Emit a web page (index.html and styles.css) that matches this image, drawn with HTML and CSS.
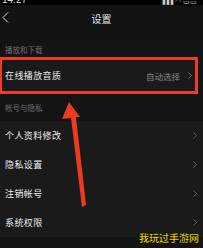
FILE: index.html
```html
<!DOCTYPE html>
<html lang="zh">
<head>
<meta charset="utf-8">
<link rel="stylesheet" href="styles.css">
</head>
<body>
<div class="screen">
  <div class="status">
    <span class="time">14:27</span>
    <span class="icons">▮▮▮ ◠ ▭▭</span>
  </div>
  <div class="header">
    <svg class="back" width="7" height="11" viewBox="0 0 7 11"><path d="M6 0.5 L1 5.5 L6 10.5" fill="none" stroke="#ddd" stroke-width="1"/></svg>
    <span class="title">设置</span>
  </div>
  <div class="section first">播放和下载</div>
  <div class="row highlight">
    <span class="label">在线播放音质</span>
    <span class="value">自动选择</span>
    <svg class="chev" width="4" height="7" viewBox="0 0 4 7"><path d="M0.5 0.5 L3.5 3.5 L0.5 6.5" fill="none" stroke="#777" stroke-width="0.9"/></svg>
  </div>
  <div class="section">帐号与隐私</div>
  <div class="row">
    <span class="label">个人资料修改</span>
    <svg class="chev" width="4" height="7" viewBox="0 0 4 7"><path d="M0.5 0.5 L3.5 3.5 L0.5 6.5" fill="none" stroke="#666" stroke-width="0.9"/></svg>
  </div>
  <div class="row">
    <span class="label">隐私设置</span>
    <svg class="chev" width="4" height="7" viewBox="0 0 4 7"><path d="M0.5 0.5 L3.5 3.5 L0.5 6.5" fill="none" stroke="#666" stroke-width="0.9"/></svg>
  </div>
  <div class="row">
    <span class="label">注销帐号</span>
    <svg class="chev" width="4" height="7" viewBox="0 0 4 7"><path d="M0.5 0.5 L3.5 3.5 L0.5 6.5" fill="none" stroke="#666" stroke-width="0.9"/></svg>
  </div>
  <div class="row">
    <span class="label">系统权限</span>
    <svg class="chev" width="4" height="7" viewBox="0 0 4 7"><path d="M0.5 0.5 L3.5 3.5 L0.5 6.5" fill="none" stroke="#666" stroke-width="0.9"/></svg>
  </div>
  <svg class="arrow" width="203" height="248" viewBox="0 0 203 248">
    <polygon points="69,102 80,117 76,117 86,205 82,207 71,118 62,119" fill="#ee3a1e"/>
  </svg>
  <div class="watermark">我玩过手游网</div>
</div>
</body>
</html>
```

FILE: styles.css
```css
html, body {
  margin: 0;
  padding: 0;
  background: #141414;
}
.screen {
  position: relative;
  width: 203px;
  height: 248px;
  overflow: hidden;
  background: #141414;
  font-family: "Noto Sans CJK SC", "Noto Sans", sans-serif;
  color: #e8e8e8;
}
.status {
  height: 5px;
  background: #000;
  overflow: hidden;
  display: flex;
  align-items: flex-end;
  justify-content: space-between;
  padding: 0 6px 0 2px;
}
.time {
  font-size: 10px;
  line-height: 10px;
  color: #ddd;
  font-family: "Liberation Sans", sans-serif;
  flex-shrink: 0;
}
.icons {
  font-size: 7px;
  line-height: 8px;
  color: #ccc;
  flex-shrink: 0;
}
.header {
  height: 28px;
  display: flex;
  align-items: center;
  justify-content: center;
  position: relative;
  background: #121212;
}
.back {
  position: absolute;
  left: 2px;
  top: 7px;
}
.title {
  font-size: 10px;
  line-height: 12px;
  color: #e6e6e6;
  margin-top: -1px;
}
.section {
  height: 27px;
  display: flex;
  align-items: center;
  padding-left: 5px;
  font-size: 7.5px;
  color: #6e6e6e;
}
.section.first {
  height: 16px;
  padding-top: 8px;
}
.row {
  height: 29px;
  display: flex;
  align-items: center;
  padding: 0 6px 0 5px;
  background: #1a1a1a;
}
.row .label {
  font-size: 9px;
  letter-spacing: 0.4px;
  color: #ececec;
  flex: 1;
}
.row .value {
  font-size: 8.5px;
  color: #8a8a8a;
  margin-right: 8px;
}
.chev {
  flex-shrink: 0;
}
.row.highlight {
  height: 31px;
  margin: 0 5px 0 0;
  border: 3px solid #ec3d22;
  border-left-width: 2px;
  padding-left: 3px;
  padding-right: 3px;
}
.arrow {
  position: absolute;
  left: 0;
  top: 0;
}
.watermark {
  position: absolute;
  right: 4px;
  top: 232px;
  font-size: 10px;
  line-height: 12px;
  font-weight: bold;
  color: #ffe400;
  -webkit-text-stroke: 0.3px #000;
  text-shadow: 0 0 1px #000, 0 0 1px #000;
}
```
